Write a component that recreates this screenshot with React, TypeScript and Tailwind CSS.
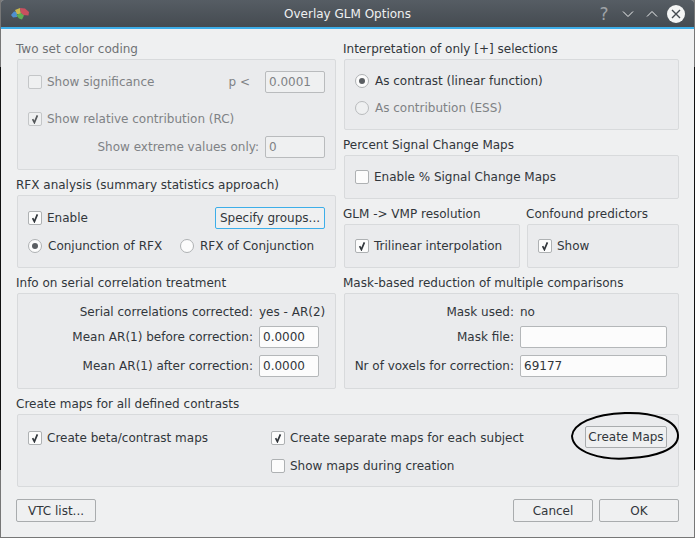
import type { ReactNode } from "react";

const ink = "text-[#31363b]";
const dim = "text-[#7f8285]";

function Section({ title, off, className, boxClass, children }: { title: string; off?: boolean; className?: string; boxClass?: string; children: ReactNode }) {
  return (
    <div className={className}>
      <div className={`-ml-px h-[20px] leading-[20px] ${off ? "text-[#6f7275]" : ink}`}>{title}</div>
      <div className={`border border-[#d8dadc] rounded-[2px] bg-[#eaebed] ${boxClass ?? ""}`}>{children}</div>
    </div>
  );
}

function Check({ checked, off, label }: { checked?: boolean; off?: boolean; label: string }) {
  return (
    <div className={`flex items-center gap-[5px] ${off ? dim : ink}`}>
      <span className={`w-[14px] h-[14px] border rounded-[2px] flex items-center justify-center ${off ? "border-[#c4c6c8] bg-[#eff0f1]" : "border-[#aeb1b3] bg-[#fcfcfc]"}`}>
        {checked && (
          <svg width="10" height="10" viewBox="0 0 10 10">
            <path d="M2.6 5.2 L4.4 8.6 L7.4 1.4" fill="none" stroke={off ? "#55585b" : "#31363b"} strokeWidth="1.7" />
          </svg>
        )}
      </span>
      <span>{label}</span>
    </div>
  );
}

function Radio({ checked, off, label }: { checked?: boolean; off?: boolean; label: string }) {
  return (
    <div className={`flex items-center gap-[6px] ${off ? dim : ink}`}>
      <span className={`w-[14px] h-[14px] rounded-full border flex items-center justify-center ${off ? "border-[#b9bbbd] bg-[#eff0f1]" : "border-[#aeb1b3] bg-[#fcfcfc]"}`}>
        {checked && <span className="w-[6px] h-[6px] rounded-full bg-[#5a5e62]" />}
      </span>
      <span>{label}</span>
    </div>
  );
}

function Field({ value, off, w }: { value: string; off?: boolean; w: string }) {
  return (
    <div className={`${w} h-[22px] border rounded-[2px] px-[3px] leading-[20px] ${off ? "border-[#b9bbbd] bg-[#eff0f1] text-[#7f8285]" : "border-[#b4b7b9] bg-[#fcfcfc] text-[#31363b]"}`}>
      {value}
    </div>
  );
}

function Btn({ label, w, focus, h = "h-[23px]" }: { label: string; w: string; focus?: boolean; h?: string }) {
  return (
    <button className={`${w} ${h} border rounded-[2px] bg-[#eff0f1] ${ink} flex items-center justify-center ${focus ? "border-[#3daee9]" : "border-[#a9acae]"}`}>
      {label}
    </button>
  );
}

function Brain() {
  return (
    <svg width="20" height="14" viewBox="0 0 20 14">
      <path d="M1 8 L4 4.5 L7 5 L7 10 L3 10.5 Z" fill="#4f8fd0" />
      <path d="M5 3 L10 1 L11 7 L7 7 Z" fill="#c9b84e" />
      <path d="M10 1 L15 1.5 L19 5 L18.5 8.5 L13 8 L11 6 Z" fill="#c9505f" />
      <path d="M6 8 L11 6 L14 8.5 L12 12.5 L9 11.5 Z" fill="#5fae52" />
    </svg>
  );
}

export default function App() {
  return (
    <div className="relative w-[695px] h-[538px] overflow-hidden bg-[linear-gradient(to_bottom,#777_0,#777_67px,#111_67px,#111_470px,#777_470px)] text-[12px] font-['DejaVu_Sans',sans-serif]">
      <div className="ml-px w-[693px] h-[537px] bg-[#eff0f1] rounded-t-[3px] overflow-hidden">
        {/* title bar */}
        <div className="relative h-[29px] border-b-2 border-[#3daee9] bg-gradient-to-b from-[#565d64] to-[#454b51] flex items-center justify-center text-[#eff0f1]">
          <div className="absolute left-[9px] top-[7px]"><Brain /></div>
          <span>Overlay GLM Options</span>
          <div className="absolute right-[9px] top-[5px] flex items-center">
            <span className="w-[14px] text-center text-[17px] leading-[18px] text-[#9ea2a6]">?</span>
            <svg className="ml-[10px]" width="14" height="18" viewBox="0 0 14 18"><path d="M2 6.5 L7 11.5 L12 6.5" fill="none" stroke="#eff0f1" strokeWidth="1" /></svg>
            <svg className="ml-[10px]" width="14" height="18" viewBox="0 0 14 18"><path d="M2 11.5 L7 6.5 L12 11.5" fill="none" stroke="#eff0f1" strokeWidth="1" /></svg>
            <svg className="ml-[8px]" width="18" height="18" viewBox="0 0 18 18">
              <circle cx="9" cy="9" r="9" fill="#f4f5f5" />
              <path d="M5 5 L13 13 M13 5 L5 13" stroke="#444a50" strokeWidth="1.4" />
            </svg>
          </div>
        </div>

        <div className="pl-[16px] pt-[10px] w-[678px]">
          <div className="flex gap-[8px]">
            {/* left column */}
            <div className="w-[320px] flex flex-col">
              <Section title="Two set color coding" off boxClass="h-[111px] px-[10px] pt-[11px]">
                <div className="flex items-center justify-between">
                  <Check off label="Show significance" />
                  <div className="flex items-center gap-[15px]">
                    <span className={dim}>p &lt;</span>
                    <Field off value="0.0001" w="w-[60px]" />
                  </div>
                </div>
                <div className="mt-[15px] h-[22px] flex items-center"><Check off checked label="Show relative contribution (RC)" /></div>
                <div className="mt-[6px] flex items-center justify-end gap-[6px]">
                  <span className={dim}>Show extreme values only:</span>
                  <Field off value="0" w="w-[60px]" />
                </div>
              </Section>
              <Section title="RFX analysis (summary statistics approach)" className="mt-[5px]" boxClass="h-[73px] px-[10px] pt-[11px]">
                <div className="flex items-center justify-between">
                  <Check checked label="Enable" />
                  <Btn focus label="Specify groups..." w="w-[110px]" h="h-[22px]" />
                </div>
                <div className="mt-[8px] flex items-center">
                  <div className="w-[152px]"><Radio checked label="Conjunction of RFX" /></div>
                  <Radio label="RFX of Conjunction" />
                </div>
              </Section>
              <Section title="Info on serial correlation treatment" className="mt-[5px]" boxClass="h-[96px] pt-[9px]">
                <div className="flex items-center h-[18px]">
                  <span className={`w-[235px] text-right ${ink}`}>Serial correlations corrected:</span>
                  <span className={`ml-[6px] ${ink}`}>yes - AR(2)</span>
                </div>
                <div className="mt-[5px] flex items-center">
                  <span className={`w-[235px] text-right ${ink}`}>Mean AR(1) before correction:</span>
                  <div className="ml-[6px]"><Field value="0.0000" w="w-[60px]" /></div>
                </div>
                <div className="mt-[7px] flex items-center">
                  <span className={`w-[235px] text-right ${ink}`}>Mean AR(1) after correction:</span>
                  <div className="ml-[6px]"><Field value="0.0000" w="w-[60px]" /></div>
                </div>
              </Section>
            </div>

            {/* right column */}
            <div className="w-[335px] flex flex-col">
              <Section title="Interpretation of only [+] selections" boxClass="h-[71px] px-[10px] pt-[12px]">
                <Radio checked label="As contrast (linear function)" />
                <div className="mt-[9px]"><Radio off label="As contribution (ESS)" /></div>
              </Section>
              <Section title="Percent Signal Change Maps" className="mt-[5px]" boxClass="h-[44px] px-[10px] pt-[12px]">
                <Check label="Enable % Signal Change Maps" />
              </Section>
              <div className="mt-[5px] flex gap-[7px]">
                <Section title="GLM -> VMP resolution" className="w-[176px]" boxClass="h-[44px] px-[10px] pt-[12px]">
                  <Check checked label="Trilinear interpolation" />
                </Section>
                <Section title="Confound predictors" className="w-[152px]" boxClass="h-[44px] px-[10px] pt-[12px]">
                  <Check checked label="Show" />
                </Section>
              </div>
              <Section title="Mask-based reduction of multiple comparisons" className="mt-[5px]" boxClass="h-[96px] pt-[9px]">
                <div className="flex items-center h-[18px]">
                  <span className={`w-[169px] text-right ${ink}`}>Mask used:</span>
                  <span className={`ml-[6px] ${ink}`}>no</span>
                </div>
                <div className="mt-[5px] flex items-center">
                  <span className={`w-[169px] text-right ${ink}`}>Mask file:</span>
                  <div className="ml-[6px]"><Field value="" w="w-[147px]" /></div>
                </div>
                <div className="mt-[7px] flex items-center">
                  <span className={`w-[169px] text-right ${ink}`}>Nr of voxels for correction:</span>
                  <div className="ml-[6px]"><Field value="69177" w="w-[147px]" /></div>
                </div>
              </Section>
            </div>
          </div>

          <Section title="Create maps for all defined contrasts" className="mt-[5px]" boxClass="h-[73px] pl-[10px] pr-[11px] pt-[14px] flex">
            <div className="w-[243px]"><Check checked label="Create beta/contrast maps" /></div>
            <div className="flex flex-col gap-[10px]">
              <Check checked label="Create separate maps for each subject" />
              <Check label="Show maps during creation" />
            </div>
            <div className="ml-auto -mt-[3px]"><Btn label="Create Maps" w="w-[82px]" h="h-[22px]" /></div>
          </Section>

          <div className="mt-[12px] -ml-px flex items-center">
            <Btn label="VTC list..." w="w-[80px]" />
            <div className="ml-auto flex gap-[6px]">
              <Btn label="Cancel" w="w-[80px]" />
              <Btn label="OK" w="w-[80px]" />
            </div>
          </div>
        </div>
      </div>

      {/* hand-drawn marker around the button */}
      <svg className="absolute left-[569px] top-[410px]" width="112" height="54" viewBox="0 0 112 54">
        <path d="M3 26 C4 14 24 4 56 3 C84 2 108 10 109 25 C110 40 84 47 62 48 C32 51 4 42 3 26 Z" fill="none" stroke="#000" strokeWidth="2" />
      </svg>
    </div>
  );
}
